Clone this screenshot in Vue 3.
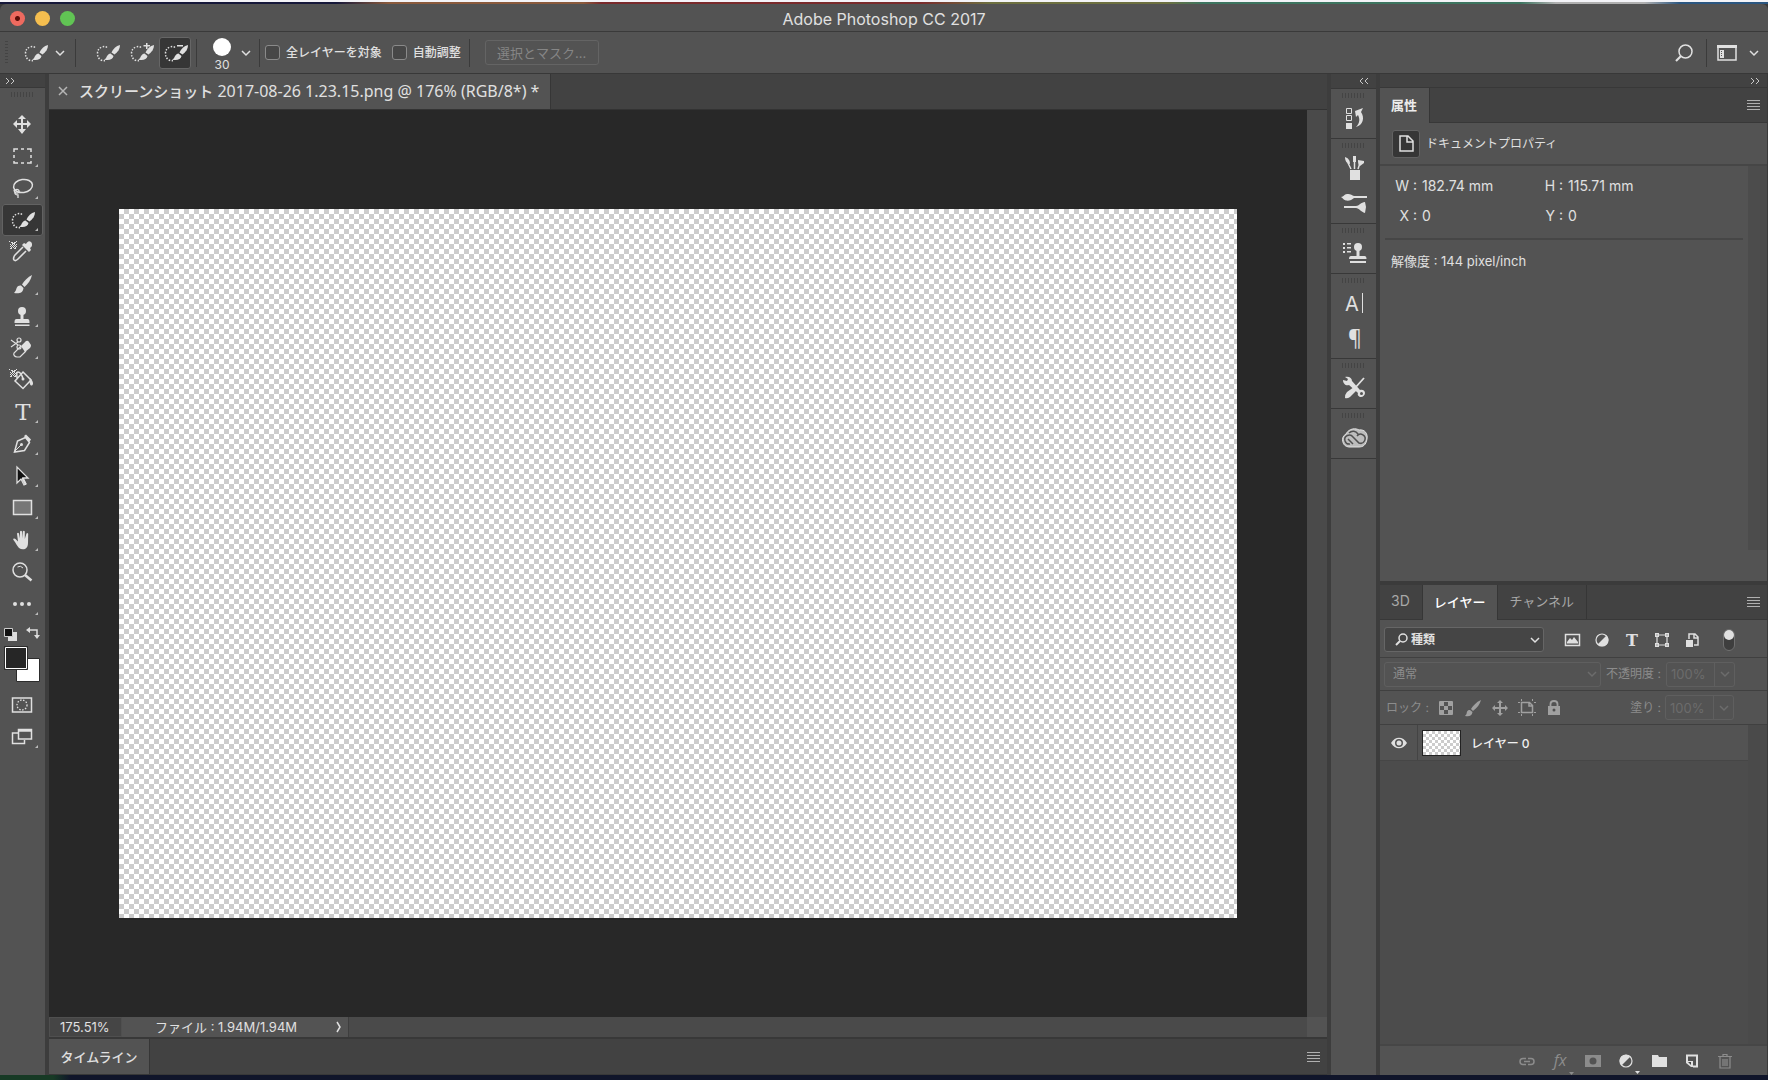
<script setup>
import { ref } from 'vue'

const quick = `
  <path d="M20 10.500q-2-1.500-5-.5-4.500 1.500-4.500 6.500 0 4.500 3.500 6.500 2 1 4 .5" fill="none" stroke="currentColor" stroke-width="1.500" stroke-dasharray="1.500 1.500"/>
  <path d="M33 8c-4 1-7 4-8.500 7.500l3 2C31 15 33 12 33 8z"/>
  <path d="M23.500 16.500c-3 .5-3.500 3-4.500 4.500-.7 1-2 1.500-2 1.500 4.500 1.500 9 0 9.500-3.500z"/>`

const patch = `<path d="M9 6h2v1H9zM12 6h2v1h-2zM8 8h1v1H8zM10 8h1v1h-1zM12 8h1v1h-1zM14 8h1v1h-1zM9 9h1v1H9zM11 9h1v1h-1zM13 9h1v1h-1zM8 10h1v1H8zM10 10h1v1h-1zM12 10h1v1h-1zM14 10h1v1h-1zM9 11h1v1H9zM11 11h1v1h-1zM13 11h1v1h-1zM8 12h2v1H8zM12 12h2v1h-2zM7 5h1v1H7zM14 5h1v1h-1zM10 7h3v1h-3z"/>`

const tools = [
  { name: '移動ツール', art: `<path d="M20 7l4 4h-3v4h4v-3l4 4-4 4v-3h-4v4h3l-4 5-4-5h3v-4h-4v3l-4-4 4-4v3h4v-4h-3z"/>` },
  { name: '長方形選択ツール', more: true, art: `<path d="M12 12V9h4M19 9h3M25 9h4v3M29 15v3M29 21v2h-4M22 23h-3M16 23h-4v-2M12 18v-3" fill="none" stroke="currentColor" stroke-width="1.500"/>` },
  { name: 'なげなわツール', more: true, art: `<ellipse cx="21" cy="14" rx="9.500" ry="6.500" transform="rotate(-8 21 14)" fill="none" stroke="currentColor" stroke-width="1.500"/><path d="M12 18c0 3 4 4 5 2s-3-4-4-1 1 4 3 4l0 3" fill="none" stroke="currentColor" stroke-width="1.300"/>` },
  { name: 'クイック選択ツール', more: true, active: true, art: quick },
  { name: 'スポイトツール', art: `${patch}<path d="M29 6c-2-2-4 0-5 2l-2-1-2 2 7 7 2-2-1-2c2-1 3-4 1-6z"/><path d="M21 11l-8 8c-1 1-2 4-1 5s3 0 4-1l8-8" fill="none" stroke="currentColor" stroke-width="1.600"/>` },
  { name: 'ブラシツール', more: true, art: `<path d="M30 7c-4 2-8 6-10 9.500l2.500 2.500C26 16 29 12 30 7z"/><path d="M19 17.500c-4-.5-4.500 3-5 4.500s-2 3-2 3c5 1 9 0 9.500-5z"/>` },
  { name: 'コピースタンプツール', more: true, art: `<circle cx="20" cy="11" r="4"/><path d="M18.500 14h3v5h4q2 0 2 3v1h-15v-1q0-3 2-3h4zM13 24.500h14.500v1.500H13z"/>` },
  { name: '消しゴムツール', more: true, art: `<g fill="none" stroke="currentColor" stroke-width="1.200"><circle cx="17" cy="8" r="2"/><circle cx="17" cy="15" r="2"/><path d="M9 8l7 5M9 15l7-5M19 14l-7 7c-1 2 1 4 3 4h3l6-6"/></g><path d="M19 14l5-5q2-1 3 1l2 3q0 2-1 3l-5 4z"/>` },
  { name: '塗りつぶしツール', art: `${patch}<path d="M21 8l8 8-8 8.500-8-7.500zM21 15c-1-4-3-7-5-7s-1 4-1 6" fill="none" stroke="currentColor" stroke-width="1.500"/><path d="M28 14c2 2 4 5 2.500 7s-4-1-2.500-7z"/><circle cx="21" cy="15" r="1.500"/>` },
  { name: '文字ツール', more: true, art: `<text x="21" y="24" text-anchor="middle" font-family="DejaVu Serif, serif" font-size="23">T</text>` },
  { name: 'ペンツール', more: true, art: `<path d="M12.500 24l3-11 8-3.500 4 5-5 8z" fill="none" stroke="currentColor" stroke-width="1.500"/><path d="M13 23l6-6" stroke="currentColor"/><circle cx="19.500" cy="16.500" r="1.500"/><path d="M22 8l2-1.500 5 5-2 3z"/>` },
  { name: 'パス選択ツール', more: true, art: `<path d="M15 7v16l4-4 3 6 2-1-3-6h5z" fill="#111" stroke="currentColor" stroke-width="1.300"/><path d="M20 19l3 6 1-1-3-6z" fill="currentColor" stroke="currentColor"/>` },
  { name: '長方形ツール', more: true, art: `<path d="M11.500 8.500h18v14h-18z" fill="#777" stroke="currentColor" stroke-width="1.500"/>` },
  { name: '手のひらツール', more: true, art: `<path d="M17 24c-2-2-3-5-5.500-8-1-1.500 1-2 2-1l2.500 2.500L15 9.500q1-1.500 2 0l1 5V7.500q1-1.500 2 0v7l.8-7q1-1.500 2 0V15l1.700-5.500q1-1 1.700.3L26 19c0 3-1 5-3 6-2 .6-4 .5-6-1z"/>` },
  { name: 'ズームツール', art: `<circle cx="18" cy="14" r="7" fill="none" stroke="currentColor" stroke-width="1.500"/><path d="M15.500 11q3-2 5.500 1" fill="none" stroke="currentColor"/><path d="M23 19l6.500 5.500" stroke="currentColor" stroke-width="2.500"/>` },
  { name: 'ツールバーを編集', more: true, art: `<circle cx="13" cy="16" r="2"/><circle cx="20" cy="16" r="2"/><circle cx="27" cy="16" r="2"/>` },
]

const screenTools = [
  { name: 'クイックマスク', art: `<path d="M10.500 9h19v14h-19z" fill="none" stroke="currentColor" stroke-width="1.500"/><circle cx="20" cy="16" r="5" fill="none" stroke="currentColor" stroke-width="1.300" stroke-dasharray="1.500 1.500"/>` },
  { name: 'スクリーンモード', more: true, art: `<path d="M16 12h-5.500v10.500h12V19" fill="none" stroke="currentColor" stroke-width="1.500"/><path d="M16.500 8.500h13V18h-13zM16.500 10h13" fill="none" stroke="currentColor" stroke-width="1.500"/>` },
]

const modes = [
  { name: '新規選択', mark: '' },
  { name: '選択範囲に追加', mark: `<path d="M25 6h1.500v2H29v1.500h-2.500V12H25V9.500h-2.500V8H25z"/>` },
  { name: '現在の選択範囲から一部削除', mark: `<path d="M22 8h6v1.500h-6z"/>`, active: true },
]

const dock = [
  [{ name: 'ヒストリー', art: `<path d="M15.500 7.500h5v5h-5zM15.500 14.500h5v5h-5z" fill="none" stroke="currentColor"/><path d="M15 22h6v6h-6zM24 10l8-3-2 4c4 6 2 13-5 15 4-4 4-8 2-12l-2 2z"/>` }],
  [
    { name: 'ブラシ', art: `<path d="M19 19h10v10H19z"/><path d="M20 18l-3-6M23.500 18v-8M27 18l2-6" stroke="currentColor" stroke-width="1.500"/><path d="M14 6c3 1 5 3 5 7-3 0-5-3-5-7zM22 5h3v6h-3zM27 9l6 1v2l-4 3c-2-1-2-4-2-6z"/>` },
    { name: 'ブラシプリセット', art: `<path d="M10 11c3 0 3-3 6-3 3-.5 5 1 7 2h13v2H23c-2 2-5 3-8 2.500-2-.5-3-2-5-3.500zM13 20h12c3 0 5-4 9-4l1 5-1 6c-4-1-6-5-9-5H13z"/>` },
  ],
  [{ name: 'コピーソース', art: `<path d="M12 7h2v2h-2zM12 11h2v2h-2zM12 15h2v2h-2zM16 7h4v1.500h-4zM16 11h4v1.500h-4zM16 15h4v1.500h-4z"/><circle cx="27" cy="11" r="4"/><path d="M25.500 14h3v6h5q2 0 2 3H18q0-3 2-3h5.500zM19 25h16v2H19z"/>` }],
  [
    { name: '文字', art: `<text x="14" y="25" font-family="Inter, sans-serif" font-size="20">A</text><path d="M31 7h1v20h-1z"/>` },
    { name: '段落', art: `<text x="24" y="24" text-anchor="middle" font-family="Noto Sans, sans-serif" font-size="21">¶</text>` },
  ],
  [{ name: 'ツールプリセット', art: `<path d="M12 9l4 1 1-2-3-2c4-1 7 1 7 4l8 9c3-1 5 1 5 3s-2 4-4 4-4-2-3-4l-9-8c-3 1-6-1-6-5z"/><circle cx="30.500" cy="22.500" r="1.500" fill="#535353"/><path d="M33 7l-9 10" stroke="currentColor" stroke-width="1.800"/><path d="M23 16l3 3-7 7q-3 2-5 1 0-4 2-6z"/>` }],
  [{ name: 'CC ライブラリ', art: `<path d="M18 26a7 7 0 0 1-3-13c3-6 10-6 13-4 6-1 9 4 8 9-1 6-4 8-8 8z" fill="#bdbdbd" stroke="#e0e0e0"/><path d="M19 23a4.500 4.500 0 1 1 3-7l6 6a4.500 4.500 0 1 0-2-7M22 23l-5-5M18 12c3-3 7-2 9 1" fill="none" stroke="#505050" stroke-width="1.500"/>` }],
]

const filters = [
  { name: 'ピクセルレイヤー', art: `<path d="M3.500 4.500h14v11h-14z" fill="none" stroke="currentColor" stroke-width="1.500"/><path d="M5 13v-1l3-4 2 2 2-3 4 5v1.500H5z"/>` },
  { name: '調整レイヤー', art: `<circle cx="10" cy="10" r="6" fill="none" stroke="currentColor" stroke-width="1.200"/><path d="M14.500 5.500a6 6 0 0 1-9 9z"/>` },
  { name: 'テキストレイヤー', art: `<text x="10" y="16" text-anchor="middle" font-family="DejaVu Serif, serif" font-weight="700" font-size="16">T</text>` },
  { name: 'シェイプレイヤー', art: `<path d="M5 5h10v10H5z" fill="none" stroke="currentColor" stroke-width="1.200"/><path d="M3 3h4v4H3zM13 3h4v4h-4zM3 13h4v4H3zM13 13h4v4h-4z"/><path d="M4.500 4.500h1v1h-1zM14.500 4.500h1v1h-1zM4.500 14.500h1v1h-1zM14.500 14.500h1v1h-1z" fill="#535353"/>` },
  { name: 'スマートオブジェクト', art: `<path d="M7 9V4h6l3 3v8h-4M12 4v4h4" fill="none" stroke="currentColor" stroke-width="1.500"/><path d="M4 10h7v7H4z"/>` },
]

const locks = [
  { name: '透明ピクセルをロック', art: `<path d="M3.500 3.500h13v13h-13z" fill="none" stroke="currentColor"/><path d="M4 4h4v4H4zM12 4h4v4h-4zM8 8h4v4H8zM4 12h4v4H4zM12 12h4v4h-4z"/>` },
  { name: '画像ピクセルをロック', art: `<path d="M18 2c-5 2-8 6-10 9l2 2c4-3 7-7 8-11zM7 12c-3 0-3 2-3.500 4L2 18c4 1 7 0 7.500-4z"/>` },
  { name: '位置をロック', art: `<path d="M10 2l3 3h-2v4h4V7l3 3-3 3v-2h-4v4h2l-3 3-3-3h2v-4H5v2l-3-3 3-3v2h4V5H7z"/>` },
  { name: 'アートボードをロック', art: `<path d="M4.500 4.500h8l3 3v7h-11zM12 5v3h3" fill="none" stroke="currentColor" stroke-width="1.500"/><path d="M4 1h1v2H4zM1 4h2v1H1zM1 14h2v1H1zM4 16h1v2H4zM15 16h1v2h-1zM17 14h2v1h-2zM17 4h2v1h-2zM15 1h1v2h-1z"/>` },
  { name: 'すべてをロック', art: `<path d="M4 8h12v9H4z"/><path d="M6.500 8V6q0-3 3.500-3t3.500 3v2" fill="none" stroke="currentColor" stroke-width="1.800"/><circle cx="10" cy="12" r="1.500" fill="#505050"/>` },
]

const actions = [
  { name: 'レイヤーをリンク', dim: true, art: `<path d="M9 7.500H6a3 3 0 0 0 0 6h3M11 7.500h3a3 3 0 0 1 0 6h-3M7 10.500h6" fill="none" stroke="currentColor" stroke-width="1.500"/>` },
  { name: 'レイヤースタイル', dim: true, art: `<text x="10" y="15" text-anchor="middle" font-family="Open Sans, sans-serif" font-style="italic" font-size="16">fx</text><path d="M19 21h5l-2.500 3z"/>` },
  { name: 'レイヤーマスク', dim: true, art: `<path fill-rule="evenodd" d="M2 4h16v12H2zM10 6.500a3.500 3.500 0 1 0 0 7 3.500 3.500 0 0 0 0-7z"/>` },
  { name: '調整レイヤーを作成', art: `<circle cx="10" cy="10" r="6" fill="none" stroke="currentColor" stroke-width="1.200"/><path d="M14.500 5.500a6 6 0 0 0-9 9z"/><path d="M19 20h5l-2.500 3z"/>` },
  { name: '新規グループ', art: `<path d="M3 4h6l1 2h8v10H3z"/>` },
  { name: '新規レイヤー', art: `<path d="M5 10V4.500h10v11h-4" fill="none" stroke="currentColor" stroke-width="2"/><path d="M4 10h7v6H9l-5-4z"/><path d="M6 11l3 3v-3z" fill="#444"/>` },
  { name: 'レイヤーを削除', dim: true, art: `<path d="M5 6v11h10V6M3 5.500h14M8 5V3.500h4V5M8 8v7M10 8v7M12 8v7" fill="none" stroke="currentColor" stroke-width="1.200"/>` },
]

const allLayers = ref(false)
const autoEnhance = ref(false)
</script>

<template>
  <div class="desktop">
    <div class="wallpaper-top"></div>
    <div class="window">
      <header class="titlebar">
        <div class="lights">
          <button class="light red" aria-label="閉じる"></button>
          <button class="light yellow" aria-label="しまう"></button>
          <button class="light green" aria-label="拡大"></button>
        </div>
        <h1>Adobe Photoshop CC 2017</h1>
      </header>

      <div class="options">
        <div class="seg seg-tool">
          <i class="vgrip"></i>
          <button class="plain preset" aria-label="ツールプリセットピッカー">
            <svg width="40" height="32" viewBox="0 0 40 32" v-html="quick"></svg>
            <svg class="chev" width="10" height="6" viewBox="0 0 10 6"><path d="M1 1l4 4 4-4" /></svg>
          </button>
        </div>
        <div class="seg seg-modes">
          <button v-for="m in modes" :key="m.name" class="plain mode" :class="{ pressed: m.active }" :aria-label="m.name">
            <svg width="40" height="32" viewBox="0 0 40 32" v-html="quick + m.mark"></svg>
          </button>
        </div>
        <div class="seg seg-brush">
          <span class="size"><i class="dot"></i>30</span>
          <button class="plain" aria-label="ブラシオプション">
            <svg class="chev" width="10" height="6" viewBox="0 0 10 6"><path d="M1 1l4 4 4-4" /></svg>
          </button>
        </div>
        <div class="seg seg-checks">
          <label><input v-model="allLayers" type="checkbox" />全レイヤーを対象</label>
          <label><input v-model="autoEnhance" type="checkbox" />自動調整</label>
        </div>
        <button class="select-mask" disabled>選択とマスク...</button>
        <div class="spacer"></div>
        <div class="seg seg-search">
          <button class="plain" aria-label="検索">
            <svg width="20" height="20" viewBox="0 0 20 20"><g fill="none" stroke="currentColor" stroke-width="1.5"><circle cx="11.500" cy="8.500" r="6.500" /><path d="M7 13l-5 5" stroke-width="2.200" /></g></svg>
          </button>
        </div>
        <button class="plain workspace" aria-label="ワークスペース">
          <svg width="20" height="16" viewBox="0 0 20 16"><path d="M1 1h18v14H1z" fill="none" stroke="currentColor" stroke-width="1.500" /><path d="M0 0h20v3H0zM3 5h4v8H3z" /><path d="M4 6h1v1H4zM4 8h1v1H4zM4 10h1v1H4z" fill="#555" /></svg>
          <svg class="chev" width="10" height="6" viewBox="0 0 10 6"><path d="M1 1l4 4 4-4" /></svg>
        </button>
      </div>

      <div class="workarea">
        <aside class="toolbar">
          <button class="collapse left" aria-label="展開">
            <svg width="10" height="6" viewBox="0 0 10 6"><path d="M1 0l3 3-3 3M6 0l3 3-3 3" /></svg>
          </button>
          <i class="hgrip"></i>
          <nav class="tools">
            <button v-for="t in tools" :key="t.name" class="tool" :class="{ active: t.active }" :aria-label="t.name">
              <svg width="40" height="32" viewBox="0 0 40 32"><g v-html="t.art"></g><path v-if="t.more" d="M36 24v3h-3z" class="corner" /></svg>
            </button>
          </nav>
          <svg class="swatches" width="40" height="60" viewBox="0 0 40 60">
            <path d="M6 6h9v9H6z" fill="#ddd" /><path d="M2.500 2.500h8v8h-8z" fill="#111" stroke="#ccc" />
            <path d="M27 4h8v7" fill="none" stroke="#ddd" stroke-width="1.500" /><path d="M24 4l4-3v6zM32 9h6l-3 4z" fill="#ddd" />
            <path d="M14.500 32.500h23v23h-23z" fill="#fff" stroke="#2c2c2c" />
            <path d="M2.500 20.500h23v23h-23z" fill="#262626" stroke="#2c2c2c" /><path d="M3.500 21.500h21v21h-21z" fill="none" stroke="#fff" />
          </svg>
          <nav class="tools">
            <button v-for="t in screenTools" :key="t.name" class="tool" :aria-label="t.name">
              <svg width="40" height="32" viewBox="0 0 40 32"><g v-html="t.art"></g><path v-if="t.more" d="M36 24v3h-3z" class="corner" /></svg>
            </button>
          </nav>
        </aside>

        <main class="document">
          <div class="tabs doc-tabs">
            <div class="doc-tab">
              <button class="plain close" aria-label="閉じる"><svg width="8" height="8" viewBox="0 0 8 8"><path d="M0 0l8 8M8 0l-8 8" stroke="currentColor" stroke-width="1.500" /></svg></button>
              <span><span class="kana">スクリーンショット</span> 2017-08-26 1.23.15.png @ 176% (RGB/8*) *</span>
            </div>
          </div>
          <div class="view">
            <div class="pasteboard"><div class="canvas"></div></div>
            <div class="vscroll"></div>
          </div>
          <div class="status">
            <input class="zoom" value="175.51%" aria-label="ズーム" />
            <button class="plain info"><span>ファイル : 1.94M/1.94M</span><svg width="6" height="12" viewBox="0 0 6 12"><path d="M1 1l3 5-3 5" fill="none" stroke="currentColor" stroke-width="1.500" /></svg></button>
            <i class="size-corner"></i>
          </div>
          <div class="timeline">
            <button class="timeline-tab">タイムライン</button>
            <button class="menu" aria-label="パネルメニュー"></button>
          </div>
        </main>

        <aside class="dock">
          <button class="collapse right" aria-label="展開">
            <svg width="10" height="6" viewBox="0 0 10 6"><path d="M4 0L1 3l3 3M9 0L6 3l3 3" /></svg>
          </button>
          <div v-for="(group, i) in dock" :key="i" class="dock-group">
            <i class="hgrip"></i>
            <button v-for="d in group" :key="d.name" class="dock-item" :aria-label="d.name">
              <svg width="45" height="35" viewBox="0 0 45 35" v-html="d.art"></svg>
            </button>
          </div>
        </aside>

        <aside class="panels">
          <button class="collapse right" aria-label="折りたたむ">
            <svg width="10" height="6" viewBox="0 0 10 6"><path d="M1 0l3 3-3 3M6 0l3 3-3 3" /></svg>
          </button>
          <section class="properties">
            <div class="tabs">
              <button class="tab on bold">属性</button>
              <button class="menu" aria-label="パネルメニュー"></button>
            </div>
            <div class="doc-props">
              <span class="doc-icon"><svg width="26" height="26" viewBox="0 0 26 26"><path d="M7 5h8l5 5v10H7zM14 5v6h6" fill="none" stroke="currentColor" stroke-width="1.500" /></svg></span>
              ドキュメントプロパティ
            </div>
            <div class="props-body">
              <div class="props-content">
                <dl class="metrics">
                  <div><dt>W :</dt><dd>182.74 mm</dd></div>
                  <div><dt>H :</dt><dd>115.71 mm</dd></div>
                  <div><dt>X :</dt><dd>0</dd></div>
                  <div><dt>Y :</dt><dd>0</dd></div>
                </dl>
                <p class="resolution">解像度 : 144 pixel/inch</p>
              </div>
              <i class="track"></i>
            </div>
          </section>

          <section class="layers">
            <div class="tabs">
              <button class="tab latin">3D</button>
              <button class="tab on">レイヤー</button>
              <button class="tab">チャンネル</button>
              <button class="menu" aria-label="パネルメニュー"></button>
            </div>
            <div class="row filter-row">
              <div class="select kind">
                <svg class="lens" width="13" height="13" viewBox="0 0 13 13"><g fill="none" stroke="currentColor" stroke-width="1.500"><circle cx="8" cy="5" r="4" /><path d="M5 8l-4 4" stroke-width="2" /></g></svg>
                <select aria-label="フィルターの種類"><option>種類</option></select>
                <svg class="chev" width="10" height="6" viewBox="0 0 10 6"><path d="M1 1l4 4 4-4" /></svg>
              </div>
              <div class="icon-set filters">
                <button v-for="f in filters" :key="f.name" class="plain" :aria-label="f.name"><svg width="20" height="20" viewBox="0 0 20 20" v-html="f.art"></svg></button>
              </div>
              <button class="toggle" aria-label="フィルターのオン/オフ"><i></i></button>
            </div>
            <div class="row dimmed blend-row">
              <div class="select blend">
                <select aria-label="描画モード" disabled><option>通常</option></select>
                <svg class="chev" width="10" height="6" viewBox="0 0 10 6"><path d="M1 1l4 4 4-4" /></svg>
              </div>
              <label for="opacity">不透明度 :</label>
              <div class="percent"><input id="opacity" value="100%" disabled /><button disabled aria-label="不透明度スライダー"><svg class="chev" width="10" height="6" viewBox="0 0 10 6"><path d="M1 1l4 4 4-4" /></svg></button></div>
            </div>
            <div class="row dimmed lock-row">
              <span class="lock-label">ロック :</span>
              <div class="icon-set locks">
                <button v-for="l in locks" :key="l.name" class="plain" disabled :aria-label="l.name"><svg width="20" height="20" viewBox="0 0 20 20" v-html="l.art"></svg></button>
              </div>
              <label for="fill">塗り :</label>
              <div class="percent"><input id="fill" value="100%" disabled /><button disabled aria-label="塗りスライダー"><svg class="chev" width="10" height="6" viewBox="0 0 10 6"><path d="M1 1l4 4 4-4" /></svg></button></div>
            </div>
            <div class="list">
              <div class="list-main">
                <div class="layer">
                  <button class="plain eye" aria-label="表示">
                    <svg width="16" height="12" viewBox="0 0 16 12"><path fill-rule="evenodd" d="M0 6c4-7 12-7 16 0-4 7-12 7-16 0zm8-4a4 4 0 1 0 0 8 4 4 0 0 0 0-8z" /><circle cx="8" cy="6" r="2.500" /></svg>
                  </button>
                  <span class="thumb"></span>
                  <span class="layer-name">レイヤー 0</span>
                </div>
              </div>
              <i class="list-track"></i>
            </div>
            <div class="actions">
              <button v-for="a in actions" :key="a.name" class="plain" :class="{ dim: a.dim }" :aria-label="a.name"><svg width="20" height="20" viewBox="0 0 20 20" v-html="a.art"></svg></button>
            </div>
          </section>
        </aside>
      </div>
    </div>
    <div class="wallpaper-bottom"></div>
  </div>
</template>

<style>
body {
  margin: 0;
  background: #11131f;
}
</style>

<style scoped>
* {
  box-sizing: border-box;
}
.desktop {
  display: flex;
  flex-direction: column;
  min-height: 100vh;
  background: #3a3a3a;
  color: #e0e0e0;
  font: 13px/18px Inter, "Noto Sans CJK JP", sans-serif;
}
button,
input,
select {
  margin: 0;
  padding: 0;
  border: 0;
  background: none;
  color: inherit;
  font: inherit;
}
svg {
  display: block;
  flex: none;
  fill: currentColor;
  overflow: visible;
}
.chev,
.collapse svg {
  fill: none;
  stroke: currentColor;
  stroke-width: 1.5;
}
.plain {
  display: flex;
  align-items: center;
  justify-content: center;
}
.wallpaper-top {
  height: 4px;
  border-top: 2px solid #f4f4f8;
  background: linear-gradient(90deg, #16183a 0 19%, #8a5a3c 22% 33%, #7a2a2c 34% 52%, #6d7040 56% 66%, #3d7560 68% 86%, #b0b0b0 88% 93%, #2b5680 95%);
}
.wallpaper-bottom {
  height: 5px;
  background: linear-gradient(90deg, #173a25 0 3%, #10152a 4%);
}
.window {
  display: flex;
  flex: 1;
  flex-direction: column;
  border-radius: 6px 6px 0 0;
  overflow: hidden;
  background: #535353;
}

.titlebar {
  display: grid;
  grid-template-columns: 1fr auto 1fr;
  align-items: center;
  height: 28px;
  padding: 2px 10px 0;
  border-bottom: 1px solid #3a3a3a;
}
.titlebar h1 {
  margin: 0;
  font-size: 16px;
  font-weight: 400;
  line-height: 20px;
}
.lights {
  display: flex;
  gap: 10px;
}
.light {
  width: 15px;
  height: 15px;
  border-radius: 50%;
}
.red {
  background: radial-gradient(circle, #5a0d08 0 2px, #ee6a5f 3px);
}
.yellow {
  background: #f5be4f;
}
.green {
  background: #61c454;
}

.options {
  display: flex;
  align-items: center;
  height: 41px;
}
.seg {
  display: flex;
  align-items: center;
  height: 28px;
  border-right: 1px solid #3b3b3b;
}
.seg-tool {
  width: 76px;
  padding-left: 5px;
}
.vgrip {
  width: 3px;
  height: 24px;
  background: repeating-linear-gradient(#444 0 1px, transparent 1px 3px);
}
.preset {
  padding-left: 7px;
}
.seg-modes {
  gap: 2px;
  padding: 0 5px 0 15px;
}
.mode {
  width: 32px;
  height: 32px;
  border: 1px solid transparent;
  border-radius: 3px;
}
.pressed {
  border-color: #666;
  background: #363636;
}
.seg-brush {
  gap: 10px;
  padding: 0 8px 0 16px;
}
.size {
  display: flex;
  flex-direction: column;
  align-items: center;
  gap: 3px;
  padding-top: 4px;
  font-size: 12px;
  line-height: 12px;
}
.dot {
  width: 18px;
  height: 18px;
  border-radius: 50%;
  background: #fff;
}
.seg-checks {
  gap: 10px;
  padding: 0 8px 0 5px;
  font-size: 12px;
}
.seg-checks label {
  display: flex;
  align-items: center;
  gap: 6px;
  font-weight: 500;
}
input[type="checkbox"] {
  width: 15px;
  height: 15px;
  border: 1px solid #8a8a8a;
  border-radius: 3px;
  background: #474747;
  appearance: none;
}
.select-mask {
  width: 114px;
  height: 25px;
  margin-left: 15px;
  border: 1px solid #646464;
  border-radius: 3px;
  color: #868686;
}
.spacer {
  flex: 1;
}
.seg-search {
  padding-right: 12px;
}
.workspace {
  gap: 12px;
  padding: 0 9px 0 10px;
}

.workarea {
  display: flex;
  flex: 1;
  gap: 4px;
  border-top: 1px solid #383838;
  background: #3d3d3d;
}
.collapse {
  display: flex;
  align-items: center;
  width: 100%;
  height: 14px;
  padding: 0 7px 0 5px;
  border-bottom: 1px solid #383838;
  background: #424242;
  color: #c8c8c8;
}
.collapse svg {
  stroke-width: 1;
}
.right {
  justify-content: flex-end;
}
.hgrip {
  display: block;
  width: 24px;
  height: 5px;
  margin: 0 auto;
  background: repeating-linear-gradient(90deg, #444 0 1px, transparent 1px 3px);
}
.toolbar {
  width: 45px;
  background: #535353;
}
.toolbar .hgrip {
  margin: 4px auto 11px;
}
.tools {
  display: flex;
  flex-direction: column;
  padding-left: 2px;
}
.tool {
  width: 41px;
  height: 32px;
  border-radius: 3px;
}
.tool.active {
  background: #363636;
  box-shadow: inset 0 0 0 1px #626262;
}
.corner {
  fill: #bbb;
}
.swatches {
  margin: 6px 2px 3px;
}

.document {
  display: flex;
  flex: 1;
  flex-direction: column;
  min-width: 0;
}
.tabs {
  display: flex;
  background: #424242;
}
.doc-tabs {
  height: 36px;
  border-bottom: 1px solid #333;
}
.doc-tab {
  display: flex;
  align-items: center;
  gap: 12px;
  padding: 0 11px 2px 10px;
  border-right: 1px solid #363636;
  background: #535353;
  font: 16px/20px "Noto Sans", "Noto Sans CJK JP", sans-serif;
}
.kana {
  font-size: 15px;
  font-weight: 500;
}
.close {
  color: #b5b5b5;
}
.view {
  display: flex;
  flex: 1;
}
.pasteboard {
  display: flex;
  flex: 1;
  padding: 99px 70px;
  background: #282828;
}
.canvas {
  flex: 1;
  background: conic-gradient(#ccc 25%, #fff 0 50%, #ccc 0 75%, #fff 0) 0 0 / 10px 10px;
}
.vscroll {
  width: 20px;
  background: #4a4a4a;
}
.status {
  display: flex;
  height: 20px;
  background: #4a4a4a;
}
.zoom {
  width: 73px;
  padding-left: 10px;
  border: 1px solid #4f4f4f;
  background: #454545;
}
.info {
  gap: 39px;
  padding: 0 6px 0 33px;
  border-right: 1px solid #3e3e3e;
  background: #535353;
}
.size-corner {
  width: 20px;
  margin-left: auto;
  background: #535353;
}
.timeline {
  display: flex;
  height: 38px;
  border: solid #383838;
  border-width: 2px 0 1px;
  background: #424242;
}
.timeline-tab {
  width: 101px;
  border-right: 1px solid #363636;
  background: #535353;
  font-weight: 500;
}
.menu {
  width: 13px;
  height: 10px;
  margin: auto 7px auto auto;
  background: repeating-linear-gradient(#b0b0b0 0 1px, transparent 1px 3px);
}

.dock {
  width: 45px;
  background: #535353;
}
.dock .collapse {
  height: 15px;
}
.dock-group {
  padding: 4px 0 2px;
  border-bottom: 1px solid #383838;
}
.dock-group .hgrip {
  margin-bottom: 3px;
}
.dock-item {
  display: block;
  width: 45px;
  height: 35px;
}

.panels {
  display: flex;
  flex-direction: column;
  width: 388px;
  border-right: 1px solid #3a3a3a;
  background: #535353;
}
.panels .tabs {
  height: 35px;
  border-bottom: 1px solid #383838;
}
.tab {
  height: 34px;
  padding: 0 12px 2px 11px;
  border-right: 1px solid #363636;
  color: #a8a8a8;
}
.tab.latin {
  font-size: 14px;
}
.tab.on {
  height: 35px;
  background: #535353;
  color: #fff;
  font-weight: 500;
}
.tab.bold {
  font-weight: 700;
  color: #ececec;
}
.properties {
  display: flex;
  flex-direction: column;
  height: 493px;
}
.doc-props {
  display: flex;
  align-items: center;
  gap: 6px;
  height: 43px;
  padding: 1px 0 0 12px;
  border-bottom: 2px solid #464646;
  font-size: 12px;
}
.doc-icon {
  border: 1px solid #626262;
  border-radius: 3px;
  background: #363636;
}
.props-body {
  display: flex;
  flex: 1;
}
.props-content {
  flex: 1;
  padding: 5px;
}
.track {
  width: 19px;
  height: 384px;
  background: #4c4c4c;
}
.metrics {
  display: grid;
  grid-template-columns: 146px auto;
  margin: 0;
  padding: 0 0 7px 10px;
  border-bottom: 2px solid #464646;
  font-size: 14px;
}
.metrics div {
  display: flex;
  height: 30px;
  align-items: center;
  gap: 5px;
}
.metrics dt {
  width: 22px;
  text-align: right;
}
.metrics dd {
  margin: 0;
}
.resolution {
  margin: 12px 6px;
}

.layers {
  display: flex;
  flex: 1;
  flex-direction: column;
  border-top: 4px solid #3b3b3b;
}
.row {
  display: flex;
  align-items: center;
  height: 33px;
  padding-left: 4px;
  border-bottom: 1px solid #404040;
}
.filter-row {
  height: 38px;
  padding-top: 2px;
}
.select {
  display: flex;
  align-items: center;
  height: 25px;
  border: 1px solid #666;
  border-radius: 3px;
}
.select select {
  flex: 1;
  align-self: stretch;
  appearance: none;
  opacity: 1;
}
.kind {
  width: 160px;
  padding: 0 3px 0 10px;
  background: #454545;
  font-size: 12px;
  font-weight: 700;
}
.kind select {
  padding-left: 3px;
}
.blend {
  width: 217px;
  padding: 0 3px 0 8px;
  border-color: #5f5f5f;
  font-size: 12px;
}
.icon-set {
  display: flex;
}
.filters {
  gap: 10px;
  margin-left: 18px;
}
.toggle {
  display: flex;
  align-items: flex-start;
  justify-content: center;
  width: 12px;
  height: 22px;
  margin-left: 21px;
  border: 1px solid #707070;
  border-radius: 6px;
  background: #3e3e3e;
}
.toggle i {
  flex: none;
  width: 10px;
  height: 10px;
  border-radius: 50%;
  background: #e0e0e0;
}
.dimmed {
  color: #8c8c8c;
  font-size: 12px;
}
.blend-row label {
  margin-left: 5px;
}
.dimmed label {
  width: 60px;
}
.percent {
  display: flex;
  width: 69px;
  height: 25px;
  border: 1px solid #5f5f5f;
  border-radius: 3px;
  color: #6c6c6c;
  font-size: 13px;
}
.percent input {
  width: 48px;
  padding-left: 4px;
  border-right: 1px solid #5f5f5f;
}
.percent button {
  display: flex;
  flex: 1;
  align-items: center;
  justify-content: center;
}
.dimmed .chev {
  color: #6c6c6c;
}
.lock-row {
  height: 34px;
}
.lock-label {
  width: 52px;
  padding-left: 2px;
}
.locks {
  gap: 7px;
  color: #a0a0a0;
}
.lock-row label {
  width: auto;
  margin-left: auto;
}
.lock-row .percent {
  margin: 0 33px 0 4px;
}
.list {
  display: flex;
  flex: 1;
  background: #4c4c4c;
}
.list-main {
  flex: 1;
}
.list-track {
  width: 19px;
  background: #4a4a4a;
}
.layer {
  display: flex;
  align-items: center;
  height: 36px;
  border-bottom: 1px solid #464646;
  background: #535353;
}
.eye {
  width: 38px;
  height: 35px;
  border-right: 1px solid #444;
}
.thumb {
  width: 39px;
  height: 26px;
  margin: 0 10px 0 4px;
  border: 1px solid #222;
  background: conic-gradient(#ccc 25%, #fff 0 50%, #ccc 0 75%, #fff 0) 0 0 / 6px 6px;
}
.layer-name {
  padding-top: 2px;
  color: #f0f0f0;
  font-weight: 500;
  font-size: 12px;
}
.actions {
  display: flex;
  justify-content: flex-end;
  gap: 13px;
  height: 31px;
  padding-right: 32px;
  border-top: 2px solid #464646;
  background: #535353;
}
.dim {
  color: #8c8c8c;
}
</style>
